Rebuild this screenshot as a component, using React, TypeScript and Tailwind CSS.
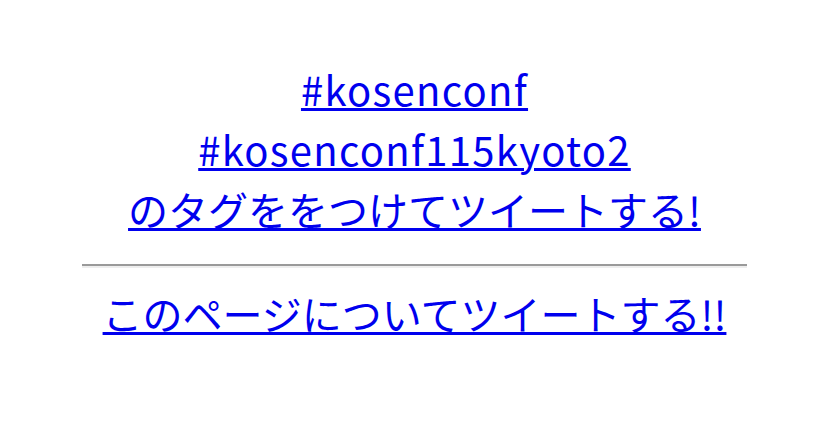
export default function App() {
  return (
    <div className="w-[829px] h-[434px] bg-white text-center" style={{ fontFamily: '"Noto Sans CJK JP", "Noto Sans", sans-serif' }}>
      <div className="pt-[59px] text-[40px] leading-[60px]">
        <a href="#" className="text-[#0000ee] underline decoration-[3px] tracking-[1.3px]">#kosenconf</a>
        <br />
        <a href="#" className="text-[#0000ee] underline decoration-[3px] tracking-[1.3px]">#kosenconf115kyoto2</a>
        <br />
        <a href="#" className="text-[#0000ee] underline decoration-[3px]">のタグををつけてツイートする!</a>
      </div>
      <hr className="mx-auto mt-[25px] w-[665px] h-0 border-t-2 border-t-[#9a9a9a] border-b-2 border-b-[#eeeeee]" />
      <div className="pt-[15px] text-[40px] leading-[60px]">
        <a href="#" className="text-[#0000ee] underline decoration-[3px]">このページについてツイートする!!</a>
      </div>
    </div>
  );
}
